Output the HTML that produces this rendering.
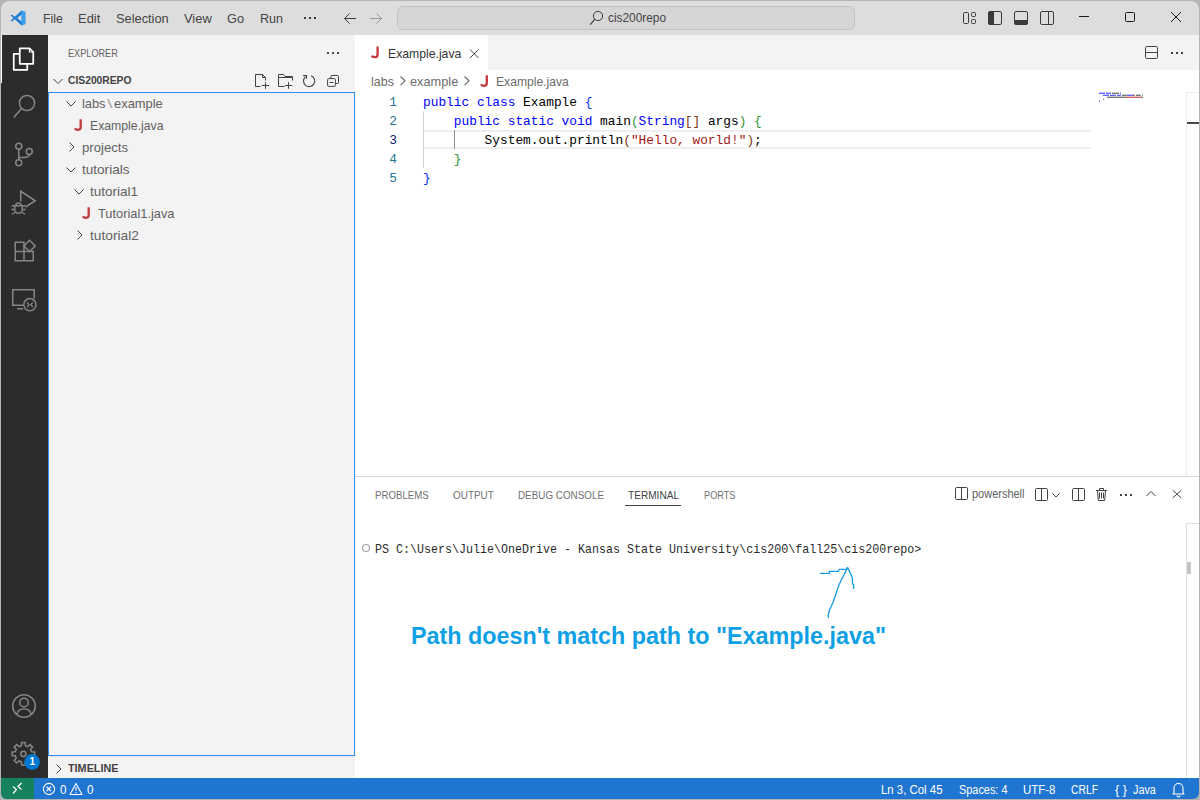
<!DOCTYPE html>
<html><head><meta charset="utf-8">
<style>
*{box-sizing:border-box;margin:0;padding:0}
html,body{width:1200px;height:800px;overflow:hidden;background:#b4b4b4}
body{position:relative;font-family:"Liberation Sans",sans-serif}
.a{position:absolute}
.t{position:absolute;white-space:pre;line-height:1}
svg{position:absolute;overflow:visible}
</style></head><body>
<div class="a" style="left:1px;top:1px;width:1198px;height:34px;background:#dddddd;border-radius:8px 8px 0 0"></div>
<svg style="left:10px;top:10px" width="16" height="16" viewBox="0 0 16 16">
 <path d="M11.6 0.4 L4.7 6.7 L1.9 4.6 L0.6 5.2 L3.4 8 L0.6 10.8 L1.9 11.4 L4.7 9.3 L11.6 15.6 L15.3 13.9 V2.1 Z M11.6 4.6 V11.4 L7.2 8 Z" fill="#1f7fd6"/>
 <path d="M11.6 0.4 L15.3 2.1 V13.9 L11.6 15.6 Z" fill="#3aa0ef"/>
</svg>
<div class="t" style="left:42.70px;top:13.29px;font-size:12.6px;color:#444444;font-weight:normal;font-family:'Liberation Sans',sans-serif;transform:scaleX(0.9755);transform-origin:0 0;">File</div>
<div class="t" style="left:77.90px;top:13.29px;font-size:12.6px;color:#444444;font-weight:normal;font-family:'Liberation Sans',sans-serif;transform:scaleX(1.0275);transform-origin:0 0;">Edit</div>
<div class="t" style="left:115.50px;top:13.29px;font-size:12.6px;color:#444444;font-weight:normal;font-family:'Liberation Sans',sans-serif;transform:scaleX(1.0171);transform-origin:0 0;">Selection</div>
<div class="t" style="left:184.20px;top:13.29px;font-size:12.6px;color:#444444;font-weight:normal;font-family:'Liberation Sans',sans-serif;transform:scaleX(1.0230);transform-origin:0 0;">View</div>
<div class="t" style="left:227.20px;top:13.29px;font-size:12.6px;color:#444444;font-weight:normal;font-family:'Liberation Sans',sans-serif;transform:scaleX(1.0112);transform-origin:0 0;">Go</div>
<div class="t" style="left:259.90px;top:13.29px;font-size:12.6px;color:#444444;font-weight:normal;font-family:'Liberation Sans',sans-serif;transform:scaleX(0.9953);transform-origin:0 0;">Run</div>
<svg style="left:303px;top:16px" width="14" height="4"><rect x="1" y="1" width="2" height="2" fill="#3b3b3b"/><rect x="6" y="1" width="2" height="2" fill="#3b3b3b"/><rect x="11" y="1" width="2" height="2" fill="#3b3b3b"/></svg>
<svg style="left:343px;top:12px" width="14" height="14" viewBox="0 0 14 14"><path d="M13 6.5 H1.5 M6.5 1.5 L1.5 6.5 L6.5 11.5" stroke="#3b3b3b" stroke-width="1" fill="none"/></svg>
<svg style="left:369px;top:12px" width="14" height="14" viewBox="0 0 14 14"><path d="M1 6.5 H12.5 M7.5 1.5 L12.5 6.5 L7.5 11.5" stroke="#9a9a9a" stroke-width="1" fill="none"/></svg>
<div class="a" style="left:397px;top:6px;width:458px;height:24px;background:#d6d6d6;border:1px solid #c2c2c2;border-radius:6px"></div>
<svg style="left:589px;top:10px" width="16" height="16" viewBox="0 0 16 16"><circle cx="9" cy="6" r="4.6" stroke="#3b3b3b" stroke-width="1" fill="none"/><path d="M5.8 9.2 L1.3 14.7" stroke="#3b3b3b" stroke-width="1.1"/></svg>
<div class="t" style="left:607.80px;top:11.80px;font-size:12px;color:#444444;font-weight:normal;font-family:'Liberation Sans',sans-serif;transform:scaleX(0.9878);transform-origin:0 0;">cis200repo</div>
<svg style="left:960px;top:10px" width="100" height="18">
 <rect x="3.5" y="2.5" width="5" height="11" rx="1" stroke="#3b3b3b" fill="none"/>
 <rect x="11.5" y="2.5" width="4" height="4" rx="1" stroke="#3b3b3b" fill="none"/>
 <rect x="11.5" y="9.5" width="4" height="4" rx="1" stroke="#3b3b3b" fill="none"/>
 <rect x="28.5" y="1.5" width="13" height="13" rx="1.5" stroke="#3b3b3b" fill="none"/>
 <path d="M28 3 a1.5 1.5 0 0 1 1.5-1.5 H34 V14.5 H29.5 a1.5 1.5 0 0 1 -1.5-1.5Z" fill="#3b3b3b"/>
 <rect x="54.5" y="1.5" width="13" height="13" rx="1.5" stroke="#3b3b3b" fill="none"/>
 <path d="M54 10 H68 V13 a1.5 1.5 0 0 1 -1.5 1.5 H55.5 a1.5 1.5 0 0 1 -1.5 -1.5Z" fill="#3b3b3b"/>
 <rect x="80.5" y="1.5" width="13" height="13" rx="1.5" stroke="#3b3b3b" fill="none"/>
 <path d="M88.5 1.5 V14.5" stroke="#3b3b3b"/>
</svg>
<svg style="left:1070px;top:8px" width="120" height="20">
 <path d="M9 8.5 H19" stroke="#1a1a1a" stroke-width="1"/>
 <rect x="55.5" y="4.5" width="9" height="9" rx="1" stroke="#1a1a1a" fill="none"/>
 <path d="M101 4 L111 14 M111 4 L101 14" stroke="#1a1a1a" stroke-width="1"/>
</svg>
<div class="a" style="left:1px;top:35px;width:47px;height:743px;background:#2c2c2c"></div>
<div class="a" style="left:1px;top:35px;width:1px;height:48px;background:#ffffff"></div>
<svg style="left:0;top:0" width="48" height="800">
 <!-- files -->
 <path d="M19.75 48.25 H29.5 L33.25 52 V63.75 H19.75 Z" stroke="#fff" stroke-width="1.75" fill="none" stroke-linejoin="round"/>
 <path d="M29.5 48.25 V52 H33.25" stroke="#fff" stroke-width="1.2" fill="none"/>
 <path d="M19.75 53.75 H13.75 V69.75 H27.25 V63.75" stroke="#fff" stroke-width="1.75" fill="none" stroke-linejoin="round"/>
 <!-- search -->
 <circle cx="27" cy="103" r="7.6" stroke="#858585" stroke-width="1.5" fill="none"/>
 <path d="M21.6 108.4 L13.8 117.6" stroke="#858585" stroke-width="1.6"/>
 <!-- source control -->
 <circle cx="18.75" cy="146.25" r="3" stroke="#858585" stroke-width="1.5" fill="none"/>
 <circle cx="29.25" cy="151.5" r="3" stroke="#858585" stroke-width="1.5" fill="none"/>
 <circle cx="18.75" cy="162.75" r="3" stroke="#858585" stroke-width="1.5" fill="none"/>
 <path d="M18.75 149.25 V159.75 M29.25 154.5 C29.25 157 27 157.5 24 157.5 H18.75" stroke="#858585" stroke-width="1.5" fill="none"/>
 <!-- run & debug -->
 <path d="M20.75 201.5 V191.25 L35.25 200.75 L25.5 207" stroke="#858585" stroke-width="1.5" fill="none" stroke-linejoin="miter"/>
 <path d="M15.75 205.75 a2.75 2.75 0 0 1 5.5 0" stroke="#858585" stroke-width="1.4" fill="none"/>
 <path d="M14.75 205.75 H22.25 V209.5 a3.75 3.75 0 0 1 -7.5 0 Z" stroke="#858585" stroke-width="1.4" fill="none"/>
 <path d="M11.75 205.75 H14.75 M22.25 205.75 H25.25 M11.5 209.5 H14.75 M22.25 209.5 H25.5 M12 214.25 L15 212.5 M25 214.25 L22 212.5" stroke="#858585" stroke-width="1.3" fill="none"/>
 <!-- extensions -->
 <path d="M15.25 242.25 H24 V251.5 H33.25 V260.75 H15.25 Z M15.25 251.5 H24 V260.75" stroke="#858585" stroke-width="1.5" fill="none" stroke-linejoin="miter"/>
 <path d="M29.5 240.25 L35.25 246 L29.5 251.5 L24 246 Z" stroke="#858585" stroke-width="1.5" fill="none" stroke-linejoin="miter"/>
 <!-- remote explorer -->
 <path d="M23.5 305.25 H12.75 V289.75 H34.25 V298.5" stroke="#858585" stroke-width="1.5" fill="none" stroke-linejoin="miter"/>
 <path d="M17 308.75 H23" stroke="#858585" stroke-width="1.5"/>
 <circle cx="29.9" cy="304.7" r="6.1" stroke="#858585" stroke-width="1.5" fill="none"/>
 <path d="M27 302.5 L29.1 304.75 L27 307 M32.8 302.5 L30.7 304.75 L32.8 307" stroke="#858585" stroke-width="1.1" fill="none"/>
 <!-- account -->
 <circle cx="24" cy="706" r="11.25" stroke="#858585" stroke-width="1.5" fill="none"/>
 <circle cx="24" cy="702.5" r="4.25" stroke="#858585" stroke-width="1.5" fill="none"/>
 <path d="M16.5 714.5 C18 710.5 21 708.75 24 708.75 C27 708.75 30 710.5 31.5 714.5" stroke="#858585" stroke-width="1.5" fill="none"/>
 <!-- gear -->
 <g transform="translate(23.4 753.8)">
  <circle r="2.6" stroke="#858585" stroke-width="1.5" fill="none"/>
  <path d="M8.17 -1.96 L11.26 -1.78 L11.26 1.78 L8.17 1.96 L7.16 4.39 L9.22 6.70 L6.70 9.22 L4.39 7.16 L1.96 8.17 L1.78 11.26 L-1.78 11.26 L-1.96 8.17 L-4.39 7.16 L-6.70 9.22 L-9.22 6.70 L-7.16 4.39 L-8.17 1.96 L-11.26 1.78 L-11.26 -1.78 L-8.17 -1.96 L-7.16 -4.39 L-9.22 -6.70 L-6.70 -9.22 L-4.39 -7.16 L-1.96 -8.17 L-1.78 -11.26 L1.78 -11.26 L1.96 -8.17 L4.39 -7.16 L6.70 -9.22 L9.22 -6.70 L7.16 -4.39 Z" stroke="#858585" stroke-width="1.5" fill="none" stroke-linejoin="miter"/>
 </g>
 <circle cx="32.1" cy="761.9" r="7.8" fill="#0078d4"/>
</svg>
<div class="t" style="left:29.40px;top:757.10px;font-size:10px;color:#ffffff;font-weight:bold;font-family:'Liberation Sans',sans-serif;">1</div>
<div class="a" style="left:48px;top:35px;width:307px;height:743px;background:#f3f3f3"></div>
<div class="t" style="left:68.30px;top:47.65px;font-size:11px;color:#616161;font-weight:normal;font-family:'Liberation Sans',sans-serif;transform:scaleX(0.8311);transform-origin:0 0;">EXPLORER</div>
<svg style="left:326px;top:50px" width="16" height="6"><rect x="1" y="2" width="2" height="2" fill="#4a4a4a"/><rect x="6" y="2" width="2" height="2" fill="#4a4a4a"/><rect x="11" y="2" width="2" height="2" fill="#4a4a4a"/></svg>
<svg style="left:52px;top:76px" width="14" height="12"><path d="M1.5 3 L6 7.5 L10.5 3" stroke="#424242" stroke-width="1" fill="none"/></svg>
<div class="t" style="left:68.00px;top:74.95px;font-size:11px;color:#424242;font-weight:bold;font-family:'Liberation Sans',sans-serif;transform:scaleX(0.9355);transform-origin:0 0;">CIS200REPO</div>
<svg style="left:0;top:0" width="1" height="1">
 <path d="M265.5 80.5 V77.5 L262.5 74.5 H255.5 V86.5 H260.5 M262.5 74.5 V77.5 H265.5" stroke="#424242" stroke-width="1" fill="none"/>
 <path d="M265.5 82.2 V88.8 M261.8 85.5 H269.2" stroke="#424242" stroke-width="1" fill="none"/>
 <path d="M278.5 86.5 V74.5 H283.5 L285 76.5 H292.5 V80.5 M278.5 77.5 H292.5 M278.5 86.5 H284.5" stroke="#424242" stroke-width="1" fill="none"/>
 <path d="M288.5 82.2 V88.8 M285 85.5 H292.2" stroke="#424242" stroke-width="1" fill="none"/>
 <path d="M311.2 75.8 A5.6 5.6 0 1 1 305.4 76.8" stroke="#424242" stroke-width="1.1" fill="none"/>
 <path d="M303.2 75.6 H306.5 V78.8" stroke="#424242" stroke-width="1.1" fill="none"/>
 <path d="M330.9 78.2 V76.5 a1 1 0 0 1 1-1 H337.5 a1 1 0 0 1 1 1 V82.5 a1 1 0 0 1 -1 1 H335.8" stroke="#424242" stroke-width="1" fill="none"/>
 <rect x="327.6" y="78.6" width="7.8" height="7.8" rx="1" stroke="#424242" stroke-width="1" fill="none"/>
 <path d="M329.5 82.5 H333.6" stroke="#424242" stroke-width="1"/>
</svg>
<div class="a" style="left:48px;top:92px;width:307px;height:664px;border:1px solid #2f8ef0"></div>
<svg style="left:66px;top:101px" width="12" height="8"><path d="M0.5 0.5 L5 5 L9.5 0.5" stroke="#424242" stroke-width="1" fill="none"/></svg>
<div class="t" style="left:82.00px;top:98.20px;font-size:12.7px;color:#616161;font-weight:normal;font-family:'Liberation Sans',sans-serif;transform:scaleX(1.0094);transform-origin:0 0;">labs</div>
<div class="t" style="left:106.50px;top:98.20px;font-size:12.7px;color:#a8a8a8;font-weight:normal;font-family:'Liberation Sans',sans-serif;transform:scaleX(1.5575);transform-origin:0 0;">\</div>
<div class="t" style="left:113.80px;top:98.20px;font-size:12.7px;color:#616161;font-weight:normal;font-family:'Liberation Sans',sans-serif;transform:scaleX(1.0173);transform-origin:0 0;">example</div>
<svg style="left:0;top:0" width="1" height="1"><path d="M80.70 119.30 V127.10 Q80.70 129.90 77.80 129.90 Q75.90 129.90 74.80 128.40" stroke="#c4383e" stroke-width="2.3" fill="none"/></svg>
<div class="t" style="left:90.20px;top:120.20px;font-size:12.7px;color:#616161;font-weight:normal;font-family:'Liberation Sans',sans-serif;transform:scaleX(0.9649);transform-origin:0 0;">Example.java</div>
<svg style="left:68.5px;top:142px" width="8" height="12"><path d="M0.5 0.5 L5 5 L0.5 9.5" stroke="#424242" stroke-width="1" fill="none"/></svg>
<div class="t" style="left:82.20px;top:142.21px;font-size:12.7px;color:#616161;font-weight:normal;font-family:'Liberation Sans',sans-serif;transform:scaleX(1.0352);transform-origin:0 0;">projects</div>
<svg style="left:66px;top:167px" width="12" height="8"><path d="M0.5 0.5 L5 5 L9.5 0.5" stroke="#424242" stroke-width="1" fill="none"/></svg>
<div class="t" style="left:82.20px;top:164.21px;font-size:12.7px;color:#616161;font-weight:normal;font-family:'Liberation Sans',sans-serif;transform:scaleX(1.0689);transform-origin:0 0;">tutorials</div>
<svg style="left:74px;top:189px" width="12" height="8"><path d="M0.5 0.5 L5 5 L9.5 0.5" stroke="#424242" stroke-width="1" fill="none"/></svg>
<div class="t" style="left:90.00px;top:186.21px;font-size:12.7px;color:#616161;font-weight:normal;font-family:'Liberation Sans',sans-serif;transform:scaleX(1.0633);transform-origin:0 0;">tutorial1</div>
<svg style="left:0;top:0" width="1" height="1"><path d="M88.70 207.30 V215.10 Q88.70 217.90 85.80 217.90 Q83.90 217.90 82.80 216.40" stroke="#c4383e" stroke-width="2.3" fill="none"/></svg>
<div class="t" style="left:97.80px;top:208.21px;font-size:12.7px;color:#616161;font-weight:normal;font-family:'Liberation Sans',sans-serif;transform:scaleX(1.0105);transform-origin:0 0;">Tutorial1.java</div>
<svg style="left:76.5px;top:230px" width="8" height="12"><path d="M0.5 0.5 L5 5 L0.5 9.5" stroke="#424242" stroke-width="1" fill="none"/></svg>
<div class="t" style="left:90.00px;top:230.21px;font-size:12.7px;color:#616161;font-weight:normal;font-family:'Liberation Sans',sans-serif;transform:scaleX(1.0855);transform-origin:0 0;">tutorial2</div>
<div class="a" style="left:48px;top:756px;width:307px;height:1px;background:#e5e5e5"></div>
<svg style="left:55.5px;top:763.5px" width="8" height="12"><path d="M0.5 0.5 L5 5 L0.5 9.5" stroke="#424242" stroke-width="1" fill="none"/></svg>
<div class="t" style="left:68.30px;top:762.65px;font-size:11px;color:#424242;font-weight:bold;font-family:'Liberation Sans',sans-serif;transform:scaleX(0.9836);transform-origin:0 0;">TIMELINE</div>
<div class="a" style="left:355px;top:35px;width:844px;height:441px;background:#ffffff"></div>
<div class="a" style="left:355px;top:35px;width:844px;height:35px;background:#f3f3f3"></div>
<div class="a" style="left:355px;top:35px;width:133px;height:35px;background:#ffffff"></div>
<svg style="left:0;top:0" width="1" height="1"><path d="M377.60 46.60 V54.40 Q377.60 57.20 374.70 57.20 Q372.80 57.20 371.70 55.70" stroke="#c4383e" stroke-width="2.3" fill="none"/></svg>
<div class="t" style="left:387.50px;top:47.70px;font-size:12.7px;color:#333333;font-weight:normal;font-family:'Liberation Sans',sans-serif;transform:scaleX(0.9623);transform-origin:0 0;">Example.java</div>
<svg style="left:469px;top:48px" width="12" height="12"><path d="M1 1.5 L9.5 10 M9.5 1.5 L1 10" stroke="#424242" stroke-width="1"/></svg>
<svg style="left:1140px;top:42px" width="60" height="22">
 <rect x="5.5" y="4.5" width="12" height="12" rx="1.2" stroke="#424242" fill="none"/>
 <path d="M5.5 10.5 H17.5" stroke="#424242"/>
 <rect x="31" y="10" width="2" height="2" fill="#424242"/><rect x="36" y="10" width="2" height="2" fill="#424242"/><rect x="41" y="10" width="2" height="2" fill="#424242"/>
</svg>
<div class="t" style="left:371.00px;top:75.61px;font-size:12.7px;color:#6c6c6c;font-weight:normal;font-family:'Liberation Sans',sans-serif;transform:scaleX(0.9879);transform-origin:0 0;">labs</div>
<svg style="left:399.7px;top:76.2px" width="8" height="12"><path d="M0.5 0.5 L5 4.8 L0.5 9.1" stroke="#616161" stroke-width="1.05" fill="none"/></svg>
<div class="t" style="left:410.20px;top:75.61px;font-size:12.7px;color:#6c6c6c;font-weight:normal;font-family:'Liberation Sans',sans-serif;transform:scaleX(1.0069);transform-origin:0 0;">example</div>
<svg style="left:463.7px;top:76.2px" width="8" height="12"><path d="M0.5 0.5 L5 4.8 L0.5 9.1" stroke="#616161" stroke-width="1.05" fill="none"/></svg>
<svg style="left:0;top:0" width="1" height="1"><path d="M486.80 75.30 V83.10 Q486.80 85.90 483.90 85.90 Q482.00 85.90 480.90 84.40" stroke="#c4383e" stroke-width="2.3" fill="none"/></svg>
<div class="t" style="left:496.30px;top:75.61px;font-size:12.7px;color:#6c6c6c;font-weight:normal;font-family:'Liberation Sans',sans-serif;transform:scaleX(0.9557);transform-origin:0 0;">Example.java</div>
<div class="a" style="left:424px;top:130px;width:667px;height:19px;border-top:2px solid #eeeeee;border-bottom:2px solid #eeeeee"></div>
<div class="a" style="left:423px;top:111px;width:1px;height:57px;background:#d3d3d3"></div>
<div class="a" style="left:454px;top:130px;width:1px;height:19px;background:#939393"></div>
<div class="t" style="left:389.20px;top:97.25px;font-size:12.833px;color:#237893;font-weight:normal;font-family:'Liberation Mono',monospace;">1</div>
<div class="t" style="left:389.20px;top:116.25px;font-size:12.833px;color:#237893;font-weight:normal;font-family:'Liberation Mono',monospace;">2</div>
<div class="t" style="left:389.20px;top:135.25px;font-size:12.833px;color:#0b216f;font-weight:normal;font-family:'Liberation Mono',monospace;">3</div>
<div class="t" style="left:389.20px;top:154.25px;font-size:12.833px;color:#237893;font-weight:normal;font-family:'Liberation Mono',monospace;">4</div>
<div class="t" style="left:389.20px;top:173.25px;font-size:12.833px;color:#237893;font-weight:normal;font-family:'Liberation Mono',monospace;">5</div>
<div class="t" style="left:423.00px;top:97.25px;font-size:12.833px;color:#0000ff;font-weight:normal;font-family:'Liberation Mono',monospace;">public class</div><div class="t" style="left:515.40px;top:97.25px;font-size:12.833px;color:#000000;font-weight:normal;font-family:'Liberation Mono',monospace;"> Example </div><div class="t" style="left:584.70px;top:97.25px;font-size:12.833px;color:#0431fa;font-weight:normal;font-family:'Liberation Mono',monospace;">{</div>
<div class="t" style="left:453.80px;top:116.25px;font-size:12.833px;color:#0000ff;font-weight:normal;font-family:'Liberation Mono',monospace;">public static void</div><div class="t" style="left:592.40px;top:116.25px;font-size:12.833px;color:#000000;font-weight:normal;font-family:'Liberation Mono',monospace;"> main</div><div class="t" style="left:630.90px;top:116.25px;font-size:12.833px;color:#319331;font-weight:normal;font-family:'Liberation Mono',monospace;">(</div><div class="t" style="left:638.60px;top:116.25px;font-size:12.833px;color:#0000ff;font-weight:normal;font-family:'Liberation Mono',monospace;">String</div><div class="t" style="left:684.80px;top:116.25px;font-size:12.833px;color:#7b3814;font-weight:normal;font-family:'Liberation Mono',monospace;">[]</div><div class="t" style="left:700.20px;top:116.25px;font-size:12.833px;color:#000000;font-weight:normal;font-family:'Liberation Mono',monospace;"> args</div><div class="t" style="left:738.70px;top:116.25px;font-size:12.833px;color:#319331;font-weight:normal;font-family:'Liberation Mono',monospace;">)</div><div class="t" style="left:746.40px;top:116.25px;font-size:12.833px;color:#000000;font-weight:normal;font-family:'Liberation Mono',monospace;"> </div><div class="t" style="left:754.10px;top:116.25px;font-size:12.833px;color:#319331;font-weight:normal;font-family:'Liberation Mono',monospace;">{</div>
<div class="t" style="left:484.60px;top:135.25px;font-size:12.833px;color:#000000;font-weight:normal;font-family:'Liberation Mono',monospace;">System.out.println</div><div class="t" style="left:623.20px;top:135.25px;font-size:12.833px;color:#7b3814;font-weight:normal;font-family:'Liberation Mono',monospace;">(</div><div class="t" style="left:630.90px;top:135.25px;font-size:12.833px;color:#a31515;font-weight:normal;font-family:'Liberation Mono',monospace;">"Hello, world!"</div><div class="t" style="left:746.40px;top:135.25px;font-size:12.833px;color:#7b3814;font-weight:normal;font-family:'Liberation Mono',monospace;">)</div><div class="t" style="left:754.10px;top:135.25px;font-size:12.833px;color:#000000;font-weight:normal;font-family:'Liberation Mono',monospace;">;</div>
<div class="t" style="left:453.80px;top:154.25px;font-size:12.833px;color:#319331;font-weight:normal;font-family:'Liberation Mono',monospace;">}</div>
<div class="t" style="left:423.00px;top:173.25px;font-size:12.833px;color:#0431fa;font-weight:normal;font-family:'Liberation Mono',monospace;">}</div>
<svg style="left:0;top:0" width="1200" height="800"><rect x="1099" y="92.6" width="6" height="1.4" fill="#4040ff" opacity="0.8"/><rect x="1106" y="92.6" width="5" height="1.4" fill="#4040ff" opacity="0.8"/><rect x="1112" y="92.6" width="7" height="1.4" fill="#555" opacity="0.8"/><rect x="1120" y="92.6" width="1" height="1.4" fill="#4040ff" opacity="0.8"/><rect x="1103" y="94.6" width="6" height="1.4" fill="#4040ff" opacity="0.8"/><rect x="1110" y="94.6" width="6" height="1.4" fill="#4040ff" opacity="0.8"/><rect x="1117" y="94.6" width="4" height="1.4" fill="#4040ff" opacity="0.8"/><rect x="1122" y="94.6" width="4" height="1.4" fill="#555" opacity="0.8"/><rect x="1126" y="94.6" width="1" height="1.4" fill="#5a9a5a" opacity="0.8"/><rect x="1127" y="94.6" width="6" height="1.4" fill="#4040ff" opacity="0.8"/><rect x="1133" y="94.6" width="2" height="1.4" fill="#8a5030" opacity="0.8"/><rect x="1136" y="94.6" width="4" height="1.4" fill="#555" opacity="0.8"/><rect x="1140" y="94.6" width="1" height="1.4" fill="#5a9a5a" opacity="0.8"/><rect x="1142" y="94.6" width="1" height="1.4" fill="#5a9a5a" opacity="0.8"/><rect x="1107" y="96.6" width="18" height="1.4" fill="#555" opacity="0.8"/><rect x="1125" y="96.6" width="1" height="1.4" fill="#8a5030" opacity="0.8"/><rect x="1126" y="96.6" width="15" height="1.4" fill="#c04040" opacity="0.8"/><rect x="1141" y="96.6" width="1" height="1.4" fill="#8a5030" opacity="0.8"/><rect x="1142" y="96.6" width="1" height="1.4" fill="#555" opacity="0.8"/><rect x="1103" y="98.6" width="1" height="1.4" fill="#5a9a5a" opacity="0.8"/><rect x="1099" y="100.6" width="1" height="1.4" fill="#4040ff" opacity="0.8"/></svg>
<div class="a" style="left:1186px;top:92px;width:1px;height:384px;background:#eeeeee"></div>
<div class="a" style="left:1186px;top:92px;width:13px;height:1px;background:#eeeeee"></div>
<div class="a" style="left:1187px;top:122px;width:12px;height:2px;background:#484848"></div>
<div class="a" style="left:355px;top:476px;width:844px;height:302px;background:#ffffff;border-top:1px solid #d5d5d5"></div>
<div class="t" style="left:375.20px;top:490.45px;font-size:11px;color:#717171;font-weight:normal;font-family:'Liberation Sans',sans-serif;transform:scaleX(0.8799);transform-origin:0 0;">PROBLEMS</div>
<div class="t" style="left:452.70px;top:490.45px;font-size:11px;color:#717171;font-weight:normal;font-family:'Liberation Sans',sans-serif;transform:scaleX(0.9020);transform-origin:0 0;">OUTPUT</div>
<div class="t" style="left:518.00px;top:490.45px;font-size:11px;color:#717171;font-weight:normal;font-family:'Liberation Sans',sans-serif;transform:scaleX(0.8961);transform-origin:0 0;">DEBUG CONSOLE</div>
<div class="t" style="left:627.50px;top:490.45px;font-size:11px;color:#424242;font-weight:normal;font-family:'Liberation Sans',sans-serif;transform:scaleX(0.9169);transform-origin:0 0;">TERMINAL</div>
<div class="t" style="left:704.00px;top:490.45px;font-size:11px;color:#717171;font-weight:normal;font-family:'Liberation Sans',sans-serif;transform:scaleX(0.8355);transform-origin:0 0;">PORTS</div>
<div class="a" style="left:625px;top:505px;width:56px;height:1px;background:#424242"></div>
<svg style="left:940px;top:480px" width="260" height="30">
 <rect x="15.5" y="7.5" width="12" height="12" rx="1.2" stroke="#424242" fill="none"/><path d="M21.5 7.5 V19.5" stroke="#424242"/>
 <rect x="95.5" y="8.5" width="12" height="12" rx="1.2" stroke="#424242" fill="none"/><path d="M101.5 8.5 V20.5" stroke="#424242"/>
 <path d="M112.5 13.5 L116 17 L119.5 13.5" stroke="#424242" fill="none"/>
 <rect x="132.5" y="8.5" width="12" height="12" rx="1.2" stroke="#424242" fill="none"/><path d="M138.5 8.5 V20.5" stroke="#424242"/>
 <path d="M156 10.5 H167 M159.5 10.5 V8.5 H163.5 V10.5 M157.5 10.5 L158.3 20.5 H164.7 L165.5 10.5 M159.5 12.5 V18.5 M161.5 12.5 V18.5 M163.5 12.5 V18.5" stroke="#424242" fill="none"/>
 <rect x="180" y="14" width="2" height="2" fill="#424242"/><rect x="185" y="14" width="2" height="2" fill="#424242"/><rect x="190" y="14" width="2" height="2" fill="#424242"/>
 <path d="M206.5 16 L211 11.5 L215.5 16" stroke="#424242" fill="none"/>
 <path d="M232.7 10.3 L241.3 18 M241.3 10.3 L232.7 18" stroke="#424242" fill="none"/>
</svg>
<div class="t" style="left:972.30px;top:487.70px;font-size:12px;color:#616161;font-weight:normal;font-family:'Liberation Sans',sans-serif;transform:scaleX(0.9150);transform-origin:0 0;">powershell</div>
<svg style="left:360px;top:542px" width="12" height="12"><circle cx="6" cy="6" r="3.5" stroke="#a5a5a5" stroke-width="1.2" fill="none"/></svg>
<div class="t" style="left:375.00px;top:542.92px;font-size:13px;color:#2b2b2b;font-weight:normal;font-family:'Liberation Mono',monospace;transform:scaleX(0.8976);transform-origin:0 0;">PS C:\Users\Julie\OneDrive - Kansas State University\cis200\fall25\cis200repo&gt;</div>
<div class="a" style="left:1186px;top:523px;width:1px;height:255px;background:#e0e0e0"></div>
<div class="a" style="left:1186px;top:523px;width:13px;height:1px;background:#e0e0e0"></div>
<div class="a" style="left:1187px;top:562px;width:4px;height:12px;background:#c4c4c4"></div>
<svg style="left:0;top:0" width="1200" height="800">
 <path d="M820.2 573.4 H829.4 V571.4 H838.1 L839.4 569.3 H846.9 L847.5 567.2" stroke="#0f9de3" stroke-width="1.3" fill="none"/>
 <path d="M847.5 567.6 L842.5 577.7 L839 584.7 L835.5 595.2 L832.9 602.7 L829.4 610.1 L828.3 615.4 V618" stroke="#0f9de3" stroke-width="1.3" fill="none"/>
 <path d="M847.5 567.2 L851.2 575.1 L852.3 577.7 L852.6 583.9 L853.6 584.7 V589" stroke="#0f9de3" stroke-width="1.3" fill="none"/>
</svg>
<div class="t" style="left:410.80px;top:625.02px;font-size:23.5px;color:#0ea0e6;font-weight:bold;font-family:'Liberation Sans',sans-serif;transform:scaleX(0.9929);transform-origin:0 0;">Path doesn't match path to "Example.java"</div>
<div class="a" style="left:1px;top:778px;width:1198px;height:21px;background:#2075d0;border-radius:0 0 6px 6px;overflow:hidden"><div class="a" style="left:0;top:0;width:33px;height:21px;background:#16825d"></div></div>
<svg style="left:0;top:776px" width="100" height="24">
 <path d="M13 10.5 L16.5 13.5 L13 17.5 M21.5 7 L18 10.5 L21.5 13.5" stroke="#fff" stroke-width="1.2" fill="none"/>
 <circle cx="49" cy="13" r="5.6" stroke="#fff" stroke-width="1.1" fill="none"/>
 <path d="M46.6 10.7 L51 15.1 M51 10.7 L46.6 15.1" stroke="#fff" stroke-width="1.25"/>
 <path d="M76 7.5 L82 18.5 H70 Z" stroke="#fff" stroke-width="1.1" fill="none" stroke-linejoin="round"/>
 <path d="M76 11 V15 M76 16 V17" stroke="#fff" stroke-width="1.1"/>
</svg>
<div class="t" style="left:59.60px;top:783.55px;font-size:12px;color:#ffffff;font-weight:normal;font-family:'Liberation Sans',sans-serif;transform:scaleX(0.9720);transform-origin:0 0;">0</div>
<div class="t" style="left:86.60px;top:783.55px;font-size:12px;color:#ffffff;font-weight:normal;font-family:'Liberation Sans',sans-serif;transform:scaleX(0.9720);transform-origin:0 0;">0</div>
<div class="t" style="left:880.80px;top:783.55px;font-size:12px;color:#ffffff;font-weight:normal;font-family:'Liberation Sans',sans-serif;transform:scaleX(0.9503);transform-origin:0 0;">Ln 3, Col 45</div>
<div class="t" style="left:958.50px;top:783.55px;font-size:12px;color:#ffffff;font-weight:normal;font-family:'Liberation Sans',sans-serif;transform:scaleX(0.9087);transform-origin:0 0;">Spaces: 4</div>
<div class="t" style="left:1023.30px;top:783.55px;font-size:12px;color:#ffffff;font-weight:normal;font-family:'Liberation Sans',sans-serif;transform:scaleX(0.9529);transform-origin:0 0;">UTF-8</div>
<div class="t" style="left:1070.80px;top:783.55px;font-size:12px;color:#ffffff;font-weight:normal;font-family:'Liberation Sans',sans-serif;transform:scaleX(0.8614);transform-origin:0 0;">CRLF</div>
<div class="t" style="left:1114.50px;top:783.55px;font-size:12px;color:#ffffff;font-weight:normal;font-family:'Liberation Sans',sans-serif;transform:scaleX(1.0388);transform-origin:0 0;">{ }</div>
<div class="t" style="left:1132.80px;top:783.55px;font-size:12px;color:#ffffff;font-weight:normal;font-family:'Liberation Sans',sans-serif;transform:scaleX(0.8991);transform-origin:0 0;">Java</div>
<svg style="left:1170px;top:780px" width="20" height="18">
 <path d="M4 12.5 V8 a4.5 4.5 0 0 1 9 0 V12.5 L14 14 H3 Z M7 15.5 a1.5 1.5 0 0 0 3 0" stroke="#fff" stroke-width="1.1" fill="none" stroke-linejoin="round"/>
</svg>
</body></html>
